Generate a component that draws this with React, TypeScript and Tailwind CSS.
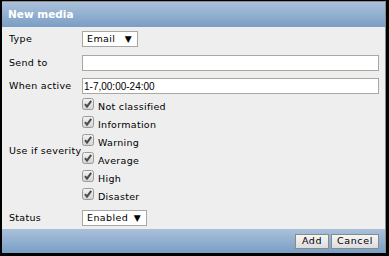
import { useState } from "react";

const severities = ["Not classified", "Information", "Warning", "Average", "High", "Disaster"];

function Check({ checked, onClick }: { checked: boolean; onClick: () => void }) {
  return (
    <button onClick={onClick} className="mt-[1px] flex h-[12px] w-[12px] shrink-0">
      <svg width="12" height="12" viewBox="0 0 12 12">
        <defs>
          <linearGradient id="cb" x1="0" y1="0" x2="0" y2="1">
            <stop offset="0" stopColor="#f4f4f4" />
            <stop offset="1" stopColor="#d2d2d2" />
          </linearGradient>
        </defs>
        <rect x="0.5" y="0.5" width="11" height="11" rx="2" fill="url(#cb)" stroke="#9a9a9a" />
        {checked && <path d="M3 6.2 L5 8.6 L9.2 2.8" fill="none" stroke="#4a4a4a" strokeWidth="2" />}
      </svg>
    </button>
  );
}

function Select({ value, width }: { value: string; width: string }) {
  return (
    <div className={`flex h-[16px] items-center justify-between border border-[#a8a8a0] bg-white pl-[4px] pr-[5px] ${width}`}>
      <span className="tracking-[0.4px]">{value}</span>
      <span className="text-[9px] leading-none">▼</span>
    </div>
  );
}

export default function App() {
  const [checked, setChecked] = useState(severities.map(() => true));

  return (
    <div
      className="h-[256px] w-[389px] bg-black pb-[3px] pl-[2px] pr-[3px] pt-[1px] text-[9.5px] text-black"
      style={{ fontFamily: "'DejaVu Sans', sans-serif" }}
    >
      <div className="flex h-full flex-col border-t border-r border-[#8c8c8c] bg-[#eeeeee]">
        <div className="flex h-[25px] shrink-0 items-center bg-gradient-to-b from-[#aac1da] to-[#7a9ec5] px-[6px] text-[10.5px] font-bold text-white">
          New media
        </div>

        <div className="grid flex-1 grid-cols-[73px_minmax(0,1fr)] content-start pl-[7px] pr-[6px] tracking-[0.3px]">
          <div className="flex h-[24px] items-center">Type</div>
          <div className="flex h-[24px] items-center">
            <Select value="Email" width="w-[56px]" />
          </div>

          <div className="flex h-[24px] items-center">Send to</div>
          <div className="flex h-[24px] items-center">
            <input className="h-[16px] w-full border border-[#a8a8a0] bg-white outline-none" />
          </div>

          <div className="flex h-[22px] items-center">When active</div>
          <div className="flex h-[22px] items-center">
            <input
              defaultValue="1-7,00:00-24:00"
              className="h-[16px] w-full border border-[#a8a8a0] bg-white px-[1px] text-[10px] tracking-normal outline-none"
              style={{ fontFamily: "'Liberation Sans', sans-serif" }}
            />
          </div>

          <div className="flex items-center">Use if severity</div>
          <div className="flex flex-col">
            {severities.map((s, i) => (
              <div key={s} className="flex h-[18px] items-start gap-[4px]">
                <Check
                  checked={checked[i]}
                  onClick={() => setChecked(checked.map((c, j) => (j === i ? !c : c)))}
                />
                <span className="mt-[4px] leading-[12px]">{s}</span>
              </div>
            ))}
          </div>

          <div className="flex h-[24px] items-center pt-[3px]">Status</div>
          <div className="flex h-[24px] items-end pb-[3px]">
            <Select value="Enabled" width="w-[65px]" />
          </div>
        </div>

        <div className="flex h-[24px] shrink-0 items-center justify-end gap-[2px] bg-gradient-to-b from-[#aac1da] to-[#7a9ec5] pr-[6px]">
          <button className="h-[15px] w-[34px] border border-[#8a8a8a] bg-gradient-to-b from-[#f6f6f6] to-[#dcdcdc] leading-none tracking-[0.6px]">
            Add
          </button>
          <button className="h-[15px] w-[48px] border border-[#8a8a8a] bg-gradient-to-b from-[#f6f6f6] to-[#dcdcdc] leading-none tracking-[0.6px]">
            Cancel
          </button>
        </div>
      </div>
    </div>
  );
}
